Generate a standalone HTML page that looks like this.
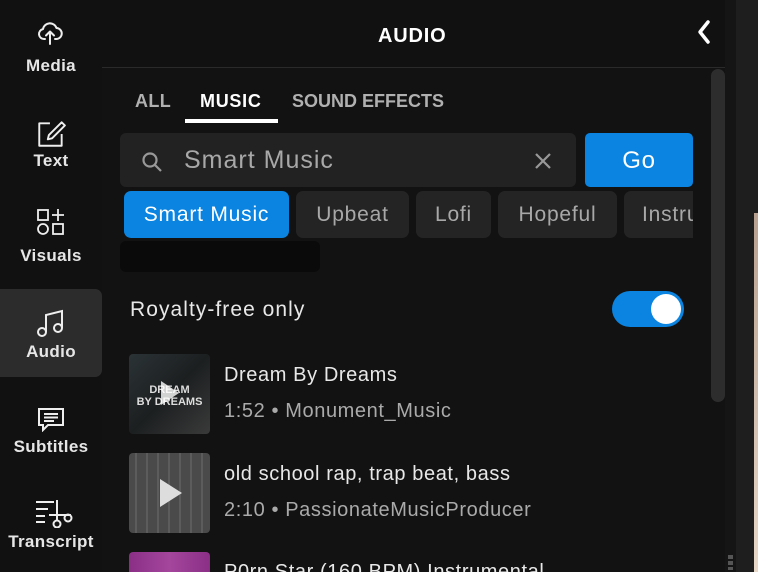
<!DOCTYPE html>
<html><head><meta charset="utf-8"><style>
*{margin:0;padding:0;box-sizing:border-box}
html,body{width:758px;height:572px;overflow:hidden}
body{background:#121212;font-family:"Liberation Sans","DejaVu Sans",sans-serif;color:#fff;position:relative;letter-spacing:.05em}
.abs{position:absolute}
.side{left:0;top:0;width:102px;height:572px;background:#111}
.lab{position:absolute;left:0;width:102px;text-align:center;font-size:17px;font-weight:bold;color:#e6e6e6;letter-spacing:.02em}
.ic{position:absolute}
.chip{position:absolute;top:0;height:47px;border-radius:7px;background:#242424;color:#a8a8a8;font-size:21px;line-height:47px;text-align:center}
</style></head><body>
<div class="abs side"></div>
<div class="abs" style="left:0;top:289px;width:102px;height:88px;background:#2c2c2c;border-radius:0 7px 7px 0"></div>

<svg class="ic" style="left:37px;top:20px" width="26" height="26" viewBox="0 0 26 26" fill="none" stroke="#eee" stroke-width="2" stroke-linecap="round" stroke-linejoin="round"><path d="M8 19H7a5 5 0 0 1-1-9.9A7 7 0 0 1 19.5 8 5 5 0 0 1 19 19h-1"/><path d="M13 24V12M9 15.5l4-4 4 4"/></svg>
<div class="lab" style="top:56px">Media</div>
<svg class="ic" style="left:35px;top:120px" width="32" height="28" viewBox="0 0 30 26" fill="none" stroke="#eee" stroke-width="1.8" stroke-linejoin="round"><path d="M14 3H4v21h21V13"/><path d="M25 2l3 3-12 12-4 1 1-4z"/></svg>
<div class="lab" style="top:151px">Text</div>
<svg class="ic" style="left:36px;top:207px" width="30" height="30" viewBox="0 0 30 30" fill="none" stroke="#eee" stroke-width="1.8"><rect x="2" y="3" width="10" height="10"/><path d="M22 2v12M16 8h12"/><circle cx="7" cy="22" r="5"/><rect x="17" y="17" width="10" height="10"/></svg>
<div class="lab" style="top:246px">Visuals</div>
<svg class="ic" style="left:36px;top:308px" width="30" height="30" viewBox="0 0 30 30" fill="none" stroke="#eee" stroke-width="2"><path d="M10 24V7l16-4v17"/><circle cx="6" cy="24" r="4"/><circle cx="22" cy="20" r="4"/></svg>
<div class="lab" style="top:342px">Audio</div>
<svg class="ic" style="left:36px;top:406px" width="30" height="26" viewBox="0 0 30 26" fill="none" stroke="#eee" stroke-width="2"><path d="M3 3h24v16H12l-5 5v-5H3z"/><path d="M8 8h14M8 11.5h14M8 15h10"/></svg>
<div class="lab" style="top:437px">Subtitles</div>
<svg class="ic" style="left:33px;top:498px" width="46" height="30" viewBox="0 0 46 30" fill="none" stroke="#eee" stroke-width="2"><path d="M3 4h18M3 11h12M3 18h9M3 24h9"/><path d="M24 2v20M16 17h22"/><circle cx="24" cy="26" r="3.5"/><circle cx="35" cy="20" r="3.5"/></svg>
<div class="lab" style="top:532px">Transcript</div>

<div class="abs" style="left:102px;top:0;width:623px;height:68px;background:#111;border-bottom:1px solid #2a2a2a"></div>
<div class="abs" style="left:378px;top:25px;font-size:20px;font-weight:bold;letter-spacing:.04em">AUDIO</div>
<svg class="abs" style="left:695px;top:19px" width="18" height="26" viewBox="0 0 18 26" fill="none" stroke="#fff" stroke-width="3.5" stroke-linecap="round" stroke-linejoin="round"><path d="M13 3L5 13l8 10"/></svg>

<div class="abs" style="left:135px;top:91px;font-size:18px;font-weight:bold;color:#b0b0b0;letter-spacing:.02em">ALL</div>
<div class="abs" style="left:200px;top:91px;font-size:18px;font-weight:bold;color:#fff;letter-spacing:.04em">MUSIC</div>
<div class="abs" style="left:292px;top:91px;font-size:18px;font-weight:bold;color:#b0b0b0;letter-spacing:0">SOUND EFFECTS</div>
<div class="abs" style="left:185px;top:119px;width:93px;height:4px;background:#fff"></div>

<div class="abs" style="left:120px;top:133px;width:456px;height:54px;background:#222;border-radius:6px"></div>
<svg class="abs" style="left:140px;top:150px" width="24" height="24" viewBox="0 0 24 24" fill="none" stroke="#999" stroke-width="2.2"><circle cx="10" cy="10" r="6.5"/><path d="M15 15l6 6"/></svg>
<div class="abs" style="left:184px;top:146px;font-size:25px;color:#a8a8a8;letter-spacing:.04em">Smart Music</div>
<svg class="abs" style="left:533px;top:151px" width="20" height="20" viewBox="0 0 20 20" stroke="#999" stroke-width="2.2"><path d="M3 3l14 14M17 3L3 17"/></svg>
<div class="abs" style="left:585px;top:133px;width:108px;height:54px;background:#0a84e0;border-radius:5px;text-align:center;line-height:56px;font-size:24px">Go</div>

<div style="position:absolute;left:120px;top:191px;width:573px;height:47px;overflow:hidden">
<div class="chip" style="left:4px;width:165px;background:#0a84e0;color:#fff">Smart Music</div>
<div class="chip" style="left:176px;width:113px">Upbeat</div>
<div class="chip" style="left:296px;width:75px">Lofi</div>
<div class="chip" style="left:378px;width:119px">Hopeful</div>
<div class="chip" style="left:504px;width:120px;text-align:left;padding-left:18px">Instrumental</div>
</div>
<div class="abs" style="left:120px;top:241px;width:200px;height:31px;background:#0a0a0a;border-radius:6px"></div>

<div class="abs" style="left:130px;top:298px;font-size:21px;color:#e8e8e8;letter-spacing:.05em">Royalty-free only</div>
<div class="abs" style="left:612px;top:291px;width:72px;height:36px;background:#0a84e0;border-radius:18px"></div>
<div class="abs" style="left:651px;top:294px;width:30px;height:30px;background:#fff;border-radius:50%"></div>

<div class="abs" style="left:129px;top:354px;width:81px;height:80px;border-radius:4px;background:linear-gradient(135deg,#2b3336,#1c1f20 50%,#3a3a3a);overflow:hidden;letter-spacing:0">
<div style="position:absolute;left:0;top:30px;width:81px;text-align:center;font-size:11px;font-weight:bold;line-height:12px;color:#ddd">DREAM<br>BY DREAMS</div>
<div style="position:absolute;left:32px;top:27px;width:0;height:0;border-left:18px solid rgba(255,255,255,.8);border-top:12px solid transparent;border-bottom:12px solid transparent"></div></div>
<div class="abs" style="left:224px;top:364px;font-size:20px;color:#e8e8e8;letter-spacing:.03em">Dream By Dreams</div>
<div class="abs" style="left:224px;top:400px;font-size:20px;color:#aaa;letter-spacing:.03em">1:52 • Monument_Music</div>

<div class="abs" style="left:129px;top:453px;width:81px;height:80px;border-radius:4px;background:#4a4a4a;background-image:repeating-linear-gradient(90deg,transparent 0 6px,#5c5c5c 6px 8px,transparent 8px 11px)">
<div style="position:absolute;left:31px;top:26px;width:0;height:0;border-left:22px solid #ddd;border-top:14px solid transparent;border-bottom:14px solid transparent"></div></div>
<div class="abs" style="left:224px;top:463px;font-size:20px;color:#e8e8e8;letter-spacing:.03em">old school rap, trap beat, bass</div>
<div class="abs" style="left:224px;top:499px;font-size:20px;color:#aaa;letter-spacing:.03em">2:10 • PassionateMusicProducer</div>

<div class="abs" style="left:129px;top:552px;width:81px;height:20px;border-radius:4px 4px 0 0;background:linear-gradient(90deg,#8a2e86,#a4469c,#8a2e86)"></div>
<div class="abs" style="left:224px;top:561px;font-size:20px;color:#e8e8e8;letter-spacing:.03em">P0rn Star (160 BPM) Instrumental</div>

<div class="abs" style="left:711px;top:69px;width:14px;height:333px;background:#2d2d2d;border-radius:7px"></div>
<div class="abs" style="left:725px;top:0;width:11px;height:572px;background:#151515"></div>
<div class="abs" style="left:736px;top:0;width:22px;height:572px;background:#1e1e1e"></div>
<div class="abs" style="left:754px;top:213px;width:4px;height:359px;background:linear-gradient(#b8a090,#e8d8c8)"></div>
<div class="abs" style="left:728px;top:555px;width:5px;height:15px;background:repeating-linear-gradient(#555 0 4px,transparent 4px 6px)"></div>
</body></html>
